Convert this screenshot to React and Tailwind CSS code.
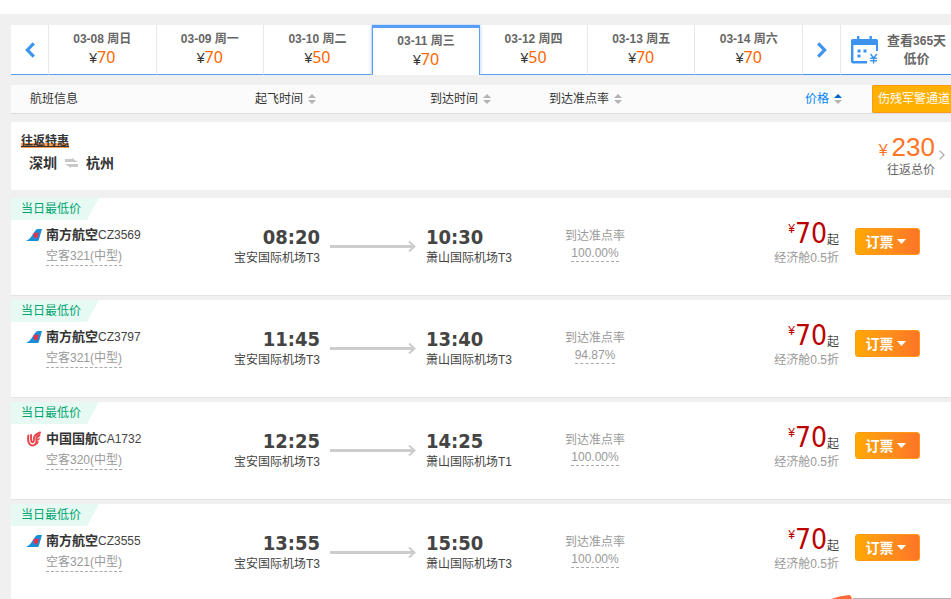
import React from "react";

const days = [
  { date: "03-08 周日", price: 70 },
  { date: "03-09 周一", price: 70 },
  { date: "03-10 周二", price: 50 },
  { date: "03-11 周三", price: 70, active: true },
  { date: "03-12 周四", price: 50 },
  { date: "03-13 周五", price: 70 },
  { date: "03-14 周六", price: 70 },
];

const flights = [
  {
    airline: "南方航空", logo: "cz", no: "CZ3569", plane: "空客321(中型)",
    depTime: "08:20", depAirport: "宝安国际机场T3",
    arrTime: "10:30", arrAirport: "萧山国际机场T3", rate: "100.00%",
  },
  {
    airline: "南方航空", logo: "cz", no: "CZ3797", plane: "空客321(中型)",
    depTime: "11:45", depAirport: "宝安国际机场T3",
    arrTime: "13:40", arrAirport: "萧山国际机场T3", rate: "94.87%",
  },
  {
    airline: "中国国航", logo: "ca", no: "CA1732", plane: "空客320(中型)",
    depTime: "12:25", depAirport: "宝安国际机场T3",
    arrTime: "14:25", arrAirport: "萧山国际机场T1", rate: "100.00%",
  },
  {
    airline: "南方航空", logo: "cz", no: "CZ3555", plane: "空客321(中型)",
    depTime: "13:55", depAirport: "宝安国际机场T3",
    arrTime: "15:50", arrAirport: "萧山国际机场T3", rate: "100.00%",
  },
];

const Chevron = ({ right }) => (
  <svg width="10" height="16" viewBox="0 0 10 16" fill="none" stroke="#3d94ee" strokeWidth="3.2">
    <path d={right ? "M1.2 1.4 L7.6 8 L1.2 14.6" : "M8.8 1.4 L2.4 8 L8.8 14.6"} />
  </svg>
);

const SortIcon = ({ active }) => (
  <svg width="8" height="10" viewBox="0 0 8 10">
    <path d="M4 0 L8 4 H0 Z" fill={active ? "#0066cc" : "#b3b3b3"} />
    <path d="M0 6 H8 L4 10 Z" fill="#b3b3b3" />
  </svg>
);

const CalendarIcon = () => (
  <svg width="28" height="28" viewBox="0 0 28 28" fill="#3d94ee" className="shrink-0">
    <path d="M1.5 3 H25.5 Q27 3 27 4.5 V15 H25 V9 H2.4 V25 H16 V27.5 H2 Q0 27.5 0 25.5 V4.5 Q0 3 1.5 3 Z" />
    <rect x="6" y="0" width="2.4" height="5" />
    <rect x="18.5" y="0" width="2.4" height="5" />
    <rect x="6.5" y="13.5" width="3" height="3" />
    <rect x="12.5" y="13.5" width="3" height="3" />
    <rect x="6.5" y="18.5" width="3" height="3" />
    <path d="M19.5 18 L22.6 22 L25.8 18 M22.6 22 V27.5 M19.2 22.2 H26 M19.2 24.8 H26" fill="none" stroke="#3d94ee" strokeWidth="1.4" />
  </svg>
);

const AirlineLogo = ({ type }) =>
  type === "cz" ? (
    <svg width="16" height="12" viewBox="0 0 16 12">
      <path d="M0 12 Q3.4 10.6 5 8 L9 2 Q10.2 0 12 0 H16 L12.8 11 Q12.5 12 11.5 12 Z" fill="#1590d8" />
      <path d="M6.6 4.6 L8.4 4.8 L9.6 3 L11 4 L13 3.6 L12.2 6 L12 8 L10.8 8.4 L10 10.6 L9 8.4 L7.4 7.8 L8 6.2 Z" fill="#e8304a" />
    </svg>
  ) : (
    <svg width="16" height="16" viewBox="0 0 16 16" fill="none" stroke="#e8474f" strokeLinecap="round">
      <path d="M2.4 4.4 Q1.4 9.5 3.2 12.6 Q5 15 7.6 14.4 Q11 13.4 10.4 9 Q10 5.2 13.6 2.4" strokeWidth="2" />
      <path d="M5.2 4 Q4.4 9 5.8 11 Q7.6 12 7.8 9.2 Q7.4 3.4 14 1.4" strokeWidth="2" />
      <path d="M10.6 6.4 Q12.8 6 13.8 4.4 M11.6 8.8 Q13 8.6 13.2 7.4 M12 10.4 Q11.8 11.8 10.8 12.8" strokeWidth="1.4" />
    </svg>
  );

const DateBar = () => (
  <div className="flex h-[50px] bg-white">
    <button aria-label="前一天" className="flex w-[38px] shrink-0 items-center justify-center border-r border-b border-r-[#e8e8e8] border-b-[#5a9df8]">
      <Chevron />
    </button>
    {days.map((day) => (
      <button
        key={day.date}
        className={
          day.active
            ? "relative flex flex-1 flex-col items-center border-x border-t-3 border-[#5a9df8] bg-white pt-1 shadow-[0_0_4px_#a9cdfb] [clip-path:inset(-1px_-4px_0px_-4px)]"
            : "flex flex-1 flex-col items-center border-r border-b border-r-[#e8e8e8] border-b-[#5a9df8] pt-[5px]"
        }
      >
        <span className="text-xs leading-[18px] font-bold text-[#666]">{day.date}</span>
        <span className="flex items-baseline leading-[18px]">
          <span className="text-sm leading-[18px] text-[#333]">¥</span>
          <span className="font-['Noto_Sans'] text-base leading-[18px] text-[#ff6600]">{day.price}</span>
        </span>
      </button>
    ))}
    <button aria-label="后一天" className="flex w-[38px] shrink-0 items-center justify-center border-r border-b border-r-[#e8e8e8] border-b-[#3d94ee]">
      <Chevron right />
    </button>
    <a href="#calendar" className="flex w-[110px] shrink-0 items-center gap-2 border-b border-[#3d94ee] pl-2.5 text-[13px] leading-[18px] font-bold text-[#666]">
      <CalendarIcon />
      <span className="text-center whitespace-nowrap">
        查看<span className="text-xs">365</span>天
        <br />
        低价
      </span>
    </a>
  </div>
);

const SortBar = () => (
  <div className="mt-2.5 grid h-[29px] grid-cols-[244px_175px_119px_1fr_67px_79px] items-center border-b border-[#ddd] bg-[#fbfbfb] text-[#333]">
    <span className="pl-[19px]">航班信息</span>
    <button className="flex items-center gap-[5px]">
      起飞时间 <SortIcon />
    </button>
    <button className="flex items-center gap-[5px]">
      到达时间 <SortIcon />
    </button>
    <button className="flex items-center gap-[5px]">
      到达准点率 <SortIcon />
    </button>
    <button className="flex items-center gap-[5px] text-[#0083f5]">
      价格 <SortIcon active />
    </button>
    <button className="h-7 overflow-hidden rounded-l-xs border border-r-0 border-[#ff9913] bg-[#ffb000] pl-[5px] text-left whitespace-nowrap text-white">
      伤残军警通道
    </button>
  </div>
);

const RoundTrip = () => (
  <a href="#round-trip" className="mt-2 flex h-[68px] justify-between bg-white pt-2.5 pl-2.5">
    <div>
      <div className="leading-[18px]">
        <span className="bg-[linear-gradient(to_top,#ff9d57_5px,transparent_5px)] font-bold text-[#333] underline decoration-1">往返特惠</span>
      </div>
      <div className="flex items-center gap-2 pt-1 pl-2 text-sm leading-[18px] font-bold text-[#333]">
        深圳
        <svg width="13" height="10" viewBox="0 0 13 10" fill="#c8c8c8">
          <path d="M0 1 H7 V0 L13 4 H0 Z M0 6 H13 V9 H6 V10 L0 6 Z" />
        </svg>
        杭州
      </div>
    </div>
    <div className="flex items-start gap-1 pr-1.5">
      <div>
        <div className="flex h-[30px] items-baseline justify-end gap-1 text-[#ff7426]">
          <span className="text-base leading-[30px]">¥</span>
          <span className="text-[26px] leading-[30px]">230</span>
        </div>
        <div className="text-right leading-4 text-[#666]">往返总价</div>
      </div>
      <svg width="6" height="10" viewBox="0 0 6 10" fill="none" stroke="#aaa" strokeWidth="1.3" className="mt-[18px]">
        <path d="M0.6 0.6 L5 5 L0.6 9.4" />
      </svg>
    </div>
  </a>
);

const FlightRow = ({ flight }) => (
  <li className="h-[98px] border-b border-[#e4e4e4] bg-white">
    <div className="h-[22px] w-[88px] bg-[#e6f9f3] pl-2.5 leading-[22px] text-[#00a56e] [clip-path:polygon(0_0,100%_0,76px_100%,0_100%)]">
      当日最低价
    </div>
    <div className="grid grid-cols-[190px_119px_106px_106px_126px_1fr_112px]">
      <div className="flex gap-1 pt-[5px] pl-[15px] whitespace-nowrap">
        <div className="flex h-5 w-4 shrink-0 items-center">
          <AirlineLogo type={flight.logo} />
        </div>
        <div>
          <div className="leading-5 text-[#444]">
            <strong className="text-[13px] text-[#333]">{flight.airline}</strong>
            {flight.no}
          </div>
          <div className="flex pt-0.5 leading-[18px] text-[#999]">
            <span className="border-b border-dashed border-[#aaa]">{flight.plane}</span>
          </div>
        </div>
      </div>
      <div className="pt-[5px] text-right text-[#444]">
        <div className="font-['DejaVu_Sans_Condensed','DejaVu_Sans'] text-xl leading-6 font-bold">{flight.depTime}</div>
        <div className="leading-[18px]">{flight.depAirport}</div>
      </div>
      <div className="px-2.5 pt-5">
        <svg width="86" height="12" viewBox="0 0 86 12" fill="none" stroke="#ccc">
          <path d="M0 6.5 H84" strokeWidth="3" />
          <path d="M79 1.5 L84.5 6.5 L79 11.5" strokeWidth="2" />
        </svg>
      </div>
      <div className="pt-[5px] text-[#444]">
        <div className="font-['DejaVu_Sans_Condensed','DejaVu_Sans'] text-xl leading-6 font-bold">{flight.arrTime}</div>
        <div className="leading-[18px]">{flight.arrAirport}</div>
      </div>
      <div className="flex flex-col items-center pt-[7px] text-[#999]">
        <span className="leading-[18px]">到达准点率</span>
        <span className="border-b border-dashed border-[#aaa] leading-4">{flight.rate}</span>
      </div>
      <div className="text-right whitespace-nowrap">
        <div className="flex h-[29px] items-end justify-end">
          <span className="self-start text-xs leading-[18px] text-[#b00]">¥</span>
          <span className="font-['DejaVu_Sans_Condensed','DejaVu_Sans'] text-[28px] leading-[30px] text-[#b00]">70</span>
          <span className="leading-[18px] text-[#444]">起</span>
        </div>
        <div className="leading-[18px] text-[#999]">经济舱0.5折</div>
      </div>
      <div className="pt-2 pl-4">
        <button className="flex h-[27px] w-[65px] items-center justify-center gap-[3px] rounded-[3px] border border-[#ff9913] bg-linear-to-r from-[#ffa800] to-[#ff7426] pr-1 text-sm font-bold text-white">
          订票
          <svg width="9" height="5" viewBox="0 0 9 5" fill="#fff">
            <path d="M0 0 H9 L4.5 5 Z" />
          </svg>
        </button>
      </div>
    </div>
  </li>
);

export default function App() {
  return (
    <div className="min-h-screen overflow-hidden bg-[#f0f0f0] font-['Liberation_Sans','Noto_Sans_CJK_SC',sans-serif] text-xs">
      <div className="h-3.5 bg-white" />
      <main className="pt-[11px] pl-[11px]">
        <DateBar />
        <SortBar />
        <RoundTrip />
        <ul className="flex flex-col gap-1 pt-2">
          {flights.map((flight) => (
            <FlightRow key={flight.no} flight={flight} />
          ))}
        </ul>
      </main>
      {/* top edge of the docked promo panel */}
      <div className="fixed right-0 bottom-0 flex w-[120px] items-end">
        <svg width="22" height="4" viewBox="0 0 22 4" className="shrink-0">
          <path d="M0 4 Q8 1 18 0 Q20 0 21 4 Z" fill="#ff6a35" />
        </svg>
        <div className="h-px flex-1 bg-[#b5b0b8]" />
      </div>
    </div>
  );
}
